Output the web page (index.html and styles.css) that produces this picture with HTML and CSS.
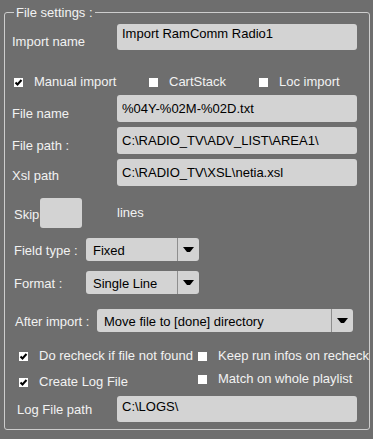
FILE: index.html
```html
<!DOCTYPE html>
<html lang="en">
<head>
    <meta charset="UTF-8">
    <title>File settings</title>
    <link rel="stylesheet" href="styles.css">
</head>
<body>
    <fieldset class="settings">
        <legend>File settings :</legend>

        <div class="row row-import">
            <span class="label pad-10">Import name</span>
            <span class="field wide pad-top-2">Import RamComm Radio1</span>
        </div>

        <div class="row row-checks">
            <span class="check w135"><svg class="box" viewBox="0 0 9 9"><rect width="9" height="9" fill="#fff"/><path d="M1.5 4.5 L3.5 6.5 L7.5 2" stroke="#000" stroke-width="2" fill="none"/></svg>Manual import</span>
            <span class="check w110"><svg class="box" viewBox="0 0 9 9"><rect width="9" height="9" fill="#fff"/></svg>CartStack</span>
            <span class="check"><svg class="box" viewBox="0 0 9 9"><rect width="9" height="9" fill="#fff"/></svg>Loc import</span>
        </div>

        <div class="row row-filename">
            <span class="label pad-11">File name</span>
            <span class="field wide tall">%04Y-%02M-%02D.txt</span>
        </div>

        <div class="row row-path">
            <span class="label pad-11">File path :</span>
            <span class="field wide tall">C:\RADIO_TV\ADV_LIST\AREA1\</span>
        </div>

        <div class="row row-path">
            <span class="label pad-9">Xsl path</span>
            <span class="field wide tall">C:\RADIO_TV\XSL\netia.xsl</span>
        </div>

        <div class="row row-skip">
            <span class="skip-label">Skip</span>
            <span class="skip-box"></span>
            <span class="lines">lines</span>
        </div>

        <div class="row row-field">
            <span class="select-label w72">Field type :</span>
            <span class="select small">
                <span class="select-text">Fixed</span>
                <span class="select-btn"><svg viewBox="0 0 11 5"><polygon points="0,0 11,0 7,5 4,5" fill="#000"/></svg></span>
            </span>
        </div>

        <div class="row row-format">
            <span class="select-label w72">Format :</span>
            <span class="select small">
                <span class="select-text">Single Line</span>
                <span class="select-btn"><svg viewBox="0 0 11 5"><polygon points="0,0 11,0 7,5 4,5" fill="#000"/></svg></span>
            </span>
        </div>

        <div class="row row-after">
            <span class="select-label w82">After import :</span>
            <span class="select large">
                <span class="select-text">Move file to [done] directory</span>
                <span class="select-btn"><svg viewBox="0 0 11 5"><polygon points="0,0 11,0 7,5 4,5" fill="#000"/></svg></span>
            </span>
        </div>

        <div class="row row-recheck">
            <span class="check w179"><svg class="box" viewBox="0 0 9 9"><rect width="9" height="9" fill="#fff"/><path d="M1.5 4.5 L3.5 6.5 L7.5 2" stroke="#000" stroke-width="2" fill="none"/></svg>Do recheck if file not found</span>
            <span class="check"><svg class="box" viewBox="0 0 9 9"><rect width="9" height="9" fill="#fff"/></svg>Keep run infos on recheck</span>
        </div>

        <div class="row row-log">
            <span class="check w179"><svg class="box" viewBox="0 0 9 9"><rect width="9" height="9" fill="#fff"/><path d="M1.5 4.5 L3.5 6.5 L7.5 2" stroke="#000" stroke-width="2" fill="none"/></svg>Create Log File</span>
            <span class="check raised"><svg class="box" viewBox="0 0 9 9"><rect width="9" height="9" fill="#fff"/></svg>Match on whole playlist</span>
        </div>

        <div class="row row-logpath">
            <span class="label pad-6 indent">Log File path</span>
            <span class="field wide pad-top-3">C:\LOGS\</span>
        </div>
    </fieldset>
</body>
</html>
```

FILE: styles.css
```css
body {
    margin: 0;
    background: #6e6e6e;
    font-family: "Liberation Sans", Arial, sans-serif;
    font-size: 13px;
    color: #f2f2f2;
}
.settings {
    box-sizing: border-box;
    width: 366px;
    margin: 5px 0 0 4px;
    padding: 0 0 7px 0;
    border: 1px solid #cdcdcd;
    border-radius: 3px;
    min-width: 0;
}
.settings legend {
    margin-left: 9px;
    padding: 0 2px;
    line-height: 15px;
    font-size: 13px;
}
.row {
    display: flex;
    align-items: flex-start;
    line-height: 16px;
}
.label {
    width: 105px;
    padding-left: 7px;
    flex: none;
}
.label.indent {
    width: 100px;
    padding-left: 12px;
}
.pad-6 { padding-top: 6px; }
.pad-9 { padding-top: 9px; }
.pad-10 { padding-top: 10px; }
.pad-11 { padding-top: 11px; }
.field {
    display: block;
    box-sizing: border-box;
    background: #d3d3d3;
    color: #000;
    border-radius: 3px;
    padding-left: 5px;
    height: 26px;
}
.field.wide { width: 240px; }
.field.tall { height: 27px; padding-top: 6px; }
.pad-top-2 { padding-top: 2px; }
.pad-top-3 { padding-top: 3px; }

.row-import { margin-top: 4px; }
.row-checks { margin-top: 24px; padding-left: 9px; height: 16px; }
.row-filename { margin-top: 5px; }
.row-path { margin-top: 5px; }
.row-skip { margin-top: 12px; }
.row-field { margin-top: 10px; }
.row-format { margin-top: 10px; }
.row-after { margin-top: 15px; }
.row-recheck { margin-top: 16px; padding-left: 14px; height: 16px; }
.row-log { margin-top: 10px; padding-left: 14px; height: 16px; }
.row-logpath { margin-top: 6px; }

.check {
    display: flex;
    align-items: center;
    flex: none;
    white-space: nowrap;
}
.check .box {
    width: 9px;
    height: 9px;
    margin-right: 11px;
    flex: none;
}
.check.raised { margin-top: -3px; }
.w135 { width: 135px; }
.w110 { width: 110px; }
.w179 { width: 179px; }

.skip-label {
    width: 26px;
    padding: 9px 0 0 9px;
    flex: none;
}
.skip-box {
    width: 42px;
    height: 30px;
    background: #d3d3d3;
    border-radius: 3px;
    flex: none;
}
.lines {
    margin-left: 35px;
    padding-top: 7px;
}

.select-label {
    flex: none;
    padding: 5px 0 0 9px;
}
.w72 { width: 72px; }
.w82 { width: 82px; padding-left: 10px; }
.select {
    display: flex;
    height: 23px;
    background: #d3d3d3;
    color: #000;
    border-radius: 3px;
    overflow: hidden;
}
.select.small { width: 113px; }
.select.large { width: 256px; }
.select-text {
    flex: 1;
    padding: 5px 0 0 7px;
}
.select-btn {
    width: 21px;
    border-left: 1px solid #8e8e8e;
    display: flex;
    align-items: center;
    justify-content: center;
}
.select-btn svg {
    width: 11px;
    height: 5px;
}
```
